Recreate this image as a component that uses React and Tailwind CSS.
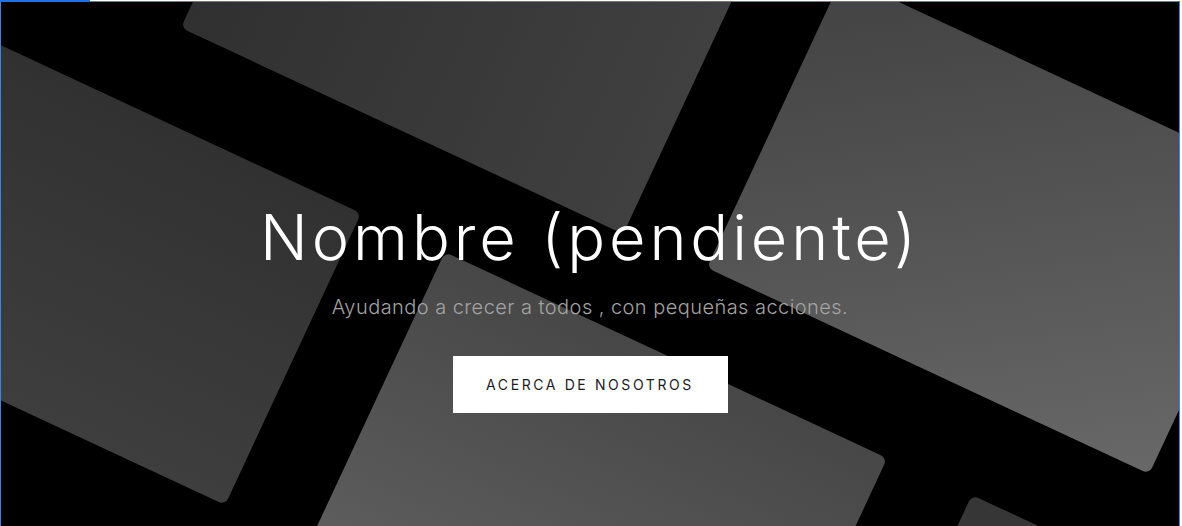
import React from 'react';

// decorative tiles behind the hero, each one rotated 25deg
const Tile = ({ className }) => (
  <div className={`absolute w-[488px] h-[322px] rounded-[7px] rotate-[25deg] ${className}`} />
);

const App = () => {
  return (
    <div className="relative h-[526px] overflow-hidden bg-white pt-px pr-[2px]">
      <section className="relative h-[540px] overflow-hidden bg-black border border-[#3a86dc]">
        <div className="absolute inset-0">
          <Tile className="left-[-173px] top-[93px] bg-linear-to-b from-[#313131] to-[#3e3e3e]" />
          <Tile className="left-[225px] top-[-178px] bg-linear-to-r from-[#303030] to-[#404040]" />
          <Tile className="left-[751px] top-[62px] bg-linear-to-br from-[#424242] to-[#686868]" />
          <Tile className="left-[353px] top-[338px] bg-linear-to-b from-[#474747] to-[#5e5e5e]" />
          <Tile className="left-[880px] top-[581px] bg-linear-to-b from-[#363636] to-[#3c3c3c]" />
        </div>

        <div className="relative flex flex-col items-center pt-[204px]" style={{ fontFamily: 'Inter, "Open Sans", sans-serif' }}>
          <h1 className="text-[63px] leading-none font-light text-white tracking-[3.9px]">
            Nombre (pendiente)
          </h1>
          <p className="mt-[28px] text-[20px] leading-none font-light text-[#a3a3a3] tracking-[0.45px]">
            Ayudando a crecer a todos , con pequeñas acciones.
          </p>
          <button className="mt-[39px] w-[275px] h-[57px] bg-white text-[#1c1c1c] text-[14px] font-normal tracking-[2.6px]">
            ACERCA DE NOSOTROS
          </button>
        </div>
      </section>
      <div className="absolute left-0 top-0 h-[2px] w-[90px] bg-[#1b74e4]" />
    </div>
  );
};

export default App;
